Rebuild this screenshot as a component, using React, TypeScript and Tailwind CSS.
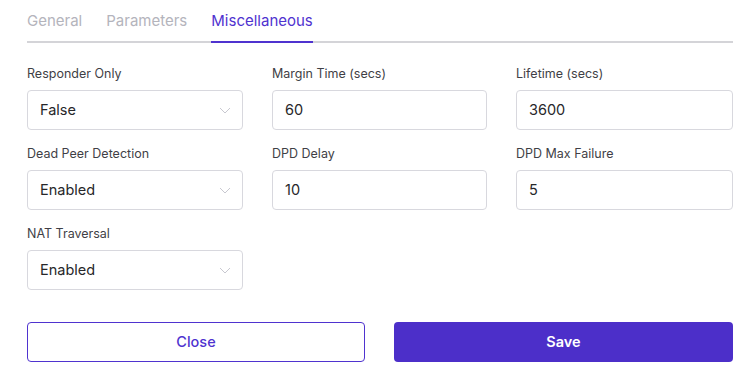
import React from "react";

const font = { fontFamily: "Inter, 'Noto Sans', sans-serif" };

function Chevron() {
  return (
    <svg width="12" height="7" viewBox="0 0 12 7" fill="none" className="shrink-0">
      <path d="M1 1l5 5 5-5" stroke="#c8c8d0" strokeWidth="1" />
    </svg>
  );
}

function SelectField({ label, value }: { label: string; value: string }) {
  return (
    <div className="flex flex-col">
      <label className="text-[12.5px] leading-[18px] text-[#3f3f46] mb-[7px]">{label}</label>
      <div className="h-[40px] border border-[#d8d8de] rounded-[4px] flex items-center justify-between pl-[12px] pr-[11px] bg-white">
        <span className="text-[14.5px] text-[#27272a]">{value}</span>
        <Chevron />
      </div>
    </div>
  );
}

function InputField({ label, value }: { label: string; value: string }) {
  return (
    <div className="flex flex-col">
      <label className="text-[12.5px] leading-[18px] text-[#3f3f46] mb-[7px]">{label}</label>
      <div className="h-[40px] border border-[#d8d8de] rounded-[4px] flex items-center pl-[12px] bg-white">
        <span className="text-[14.5px] text-[#27272a]">{value}</span>
      </div>
    </div>
  );
}

export default function App() {
  return (
    <div className="w-[748px] h-[377px] bg-white pl-[27px] pt-[10px]" style={font}>
      <div className="w-[706px]">
        <div className="flex gap-[24px] border-b-2 border-[#d4d4d8] h-[33px]">
          <div className="text-[15px] leading-[22px] text-[#b4b4bc]">General</div>
          <div className="text-[15px] leading-[22px] text-[#b4b4bc]">Parameters</div>
          <div className="text-[15px] leading-[22px] text-[#4f33cf] border-b-2 border-[#4f33cf] h-[33px]">Miscellaneous</div>
        </div>
        <div className="grid grid-cols-[216px_215px_217px] gap-x-[29px] gap-y-[15px] mt-[22px]">
          <SelectField label="Responder Only" value="False" />
          <InputField label="Margin Time (secs)" value="60" />
          <InputField label="Lifetime (secs)" value="3600" />
          <SelectField label="Dead Peer Detection" value="Enabled" />
          <InputField label="DPD Delay" value="10" />
          <InputField label="DPD Max Failure" value="5" />
          <SelectField label="NAT Traversal" value="Enabled" />
        </div>
        <div className="grid grid-cols-[338px_339px] gap-x-[29px] mt-[32px]">
          <button className="h-[40px] border border-[#4f33cf] rounded-[4px] text-[#4f33cf] text-[14.5px] font-medium bg-white">Close</button>
          <button className="h-[40px] rounded-[4px] bg-[#4c2fc9] text-white text-[14.5px] font-semibold">Save</button>
        </div>
      </div>
    </div>
  );
}
